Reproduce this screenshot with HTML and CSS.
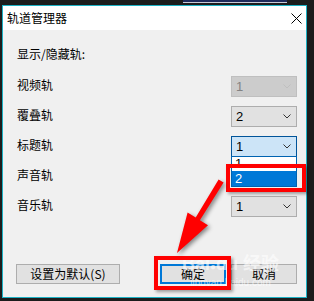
FILE: index.html
```html
<!DOCTYPE html>
<html lang="zh-CN">
<head>
<meta charset="utf-8">
<title>轨道管理器</title>
<link rel="stylesheet" href="styles.css">
</head>
<body>
<div class="screen">
  <div class="bg-strip"></div>
  <div class="dialog">
    <div class="titlebar">
      <span class="title">轨道管理器</span>
      <svg class="close" width="11" height="11" viewBox="0 0 11 11"><path d="M0.5 0.5 L10.5 10.5 M10.5 0.5 L0.5 10.5" stroke="#000" stroke-width="1" fill="none"/></svg>
    </div>
    <div class="content">
      <div class="heading">显示/隐藏轨:</div>
      <div class="rows">
        <div class="row"><span class="label">视频轨</span><div class="combo disabled"><span>1</span><svg class="chev" width="8" height="5" viewBox="0 0 8 5"><path d="M0.5 0.5 L4 4 L7.5 0.5" stroke="currentColor" fill="none"/></svg></div></div>
        <div class="row"><span class="label">覆叠轨</span><div class="combo"><span>2</span><svg class="chev" width="8" height="5" viewBox="0 0 8 5"><path d="M0.5 0.5 L4 4 L7.5 0.5" stroke="currentColor" fill="none"/></svg></div></div>
        <div class="row"><span class="label">标题轨</span><div class="combo open"><span>1</span><svg class="chev" width="8" height="5" viewBox="0 0 8 5"><path d="M0.5 0.5 L4 4 L7.5 0.5" stroke="currentColor" fill="none"/></svg>
          <div class="dropdown"><div class="opt">1</div><div class="opt sel">2</div></div>
        </div></div>
        <div class="row"><span class="label">声音轨</span><div class="combo"></div></div>
        <div class="row"><span class="label">音乐轨</span><div class="combo"><span>1</span><svg class="chev" width="8" height="5" viewBox="0 0 8 5"><path d="M0.5 0.5 L4 4 L7.5 0.5" stroke="currentColor" fill="none"/></svg></div></div>
      </div>
      <div class="footer">
        <button class="btn wide">设置为默认(S)</button>
        <div class="btn-group">
          <button class="btn default">确定</button>
          <button class="btn">取消</button>
        </div>
      </div>
    </div>
  </div>
  <div class="watermark"><span class="wm-main">Bai<span class="paw">&#9679;</span>du 经验</span><span class="wm-sub">jingyan.baidu.com</span></div>
  <div class="hl hl-option"></div>
  <div class="hl hl-ok"></div>
  <svg class="arrow" width="314" height="301" viewBox="0 0 314 301">
    <polygon points="223.6,182.6 218.6,179.4 195.7,217.6 187.6,212.6 177,253 208,225.2 199.9,220.2" fill="#ff0000"/>
  </svg>
</div>
</body>
</html>
```

FILE: styles.css
```css
* { box-sizing: border-box; }
html, body { margin: 0; padding: 0; }
body {
  background: #1c1c1c;
  font-family: "Noto Sans CJK SC", "Noto Sans", sans-serif;
  font-size: 12px;
  color: #000;
}
.screen {
  position: relative;
  width: 314px;
  height: 301px;
  padding: 5px 7px 3px 2px;
  overflow: hidden;
}
.bg-strip {
  position: absolute;
  left: 183px;
  top: 0;
  width: 104px;
  height: 3px;
  background: #1d2a5a;
  border-bottom: 1px solid #c9c9d6;
}
.dialog {
  width: 305px;
  height: 293px;
  border: 1px solid #1cb1c4;
  background: #f0f0f0;
  display: flex;
  flex-direction: column;
}
.titlebar {
  height: 24px;
  background: #ffffff;
  display: flex;
  align-items: center;
  justify-content: space-between;
  padding: 0 4px 0 4px;
  flex: none;
}
.title { line-height: 16px; }
.close { display: block; }
.content {
  flex: 1;
  display: flex;
  flex-direction: column;
  padding: 16px 9px 13px 14px;
}
.heading { line-height: 16px; }
.rows {
  margin-top: 14px;
  display: flex;
  flex-direction: column;
  gap: 10px;
}
.row {
  display: flex;
  justify-content: space-between;
  align-items: center;
  height: 20px;
}
.label { line-height: 16px; margin-top: -3px; }
.combo {
  position: relative;
  width: 66px;
  height: 21px;
  background: #e1e1e1;
  border: 1px solid #adadad;
  display: flex;
  align-items: center;
  justify-content: space-between;
  padding: 0 5px 0 4px;
  color: #333;
  font-family: "Liberation Sans", sans-serif;
  font-size: 13px;
}
.combo span { color: #000; }
.combo.disabled { background: #cccccc; border-color: #bfbfbf; color: #bfbfbf; }
.combo.disabled span { color: #838383; }
.combo.open { background: #cce4f7; border-color: #005499; }
.chev { display: block; }
.dropdown {
  position: absolute;
  left: -1px;
  top: 19px;
  width: 66px;
  background: #fff;
  border: 1px solid #0063b1;
  z-index: 2;
}
.opt { height: 14px; line-height: 14px; padding-left: 3px; color: #000; }
.opt.sel { background: #0078d7; color: #fff; height: 15px; line-height: 15px; }
.footer {
  margin-top: auto;
  margin-left: -1px;
  display: flex;
  justify-content: space-between;
  align-items: center;
}
.btn {
  height: 20px;
  width: 66px;
  background: #e1e1e1;
  border: 1px solid #adadad;
  font-family: "Noto Sans CJK SC", sans-serif;
  font-size: 12px;
  line-height: 16px;
  padding: 0;
  color: #000;
}
.btn.wide { width: 104px; }
.btn.default { border: 2px solid #0078d7; }
.btn-group { display: flex; gap: 5px; }
.hl {
  position: absolute;
  border: 4px solid #ff0000;
  box-shadow: 2px 2px 3px rgba(0,0,0,0.35);
  z-index: 5;
}
.hl-option { left: 226px; top: 164px; width: 80px; height: 28px; }
.hl-ok { left: 154px; top: 256px; width: 77px; height: 34px; }
.arrow {
  position: absolute;
  left: 0;
  top: 0;
  z-index: 6;
  filter: drop-shadow(2px 2px 2px rgba(0,0,0,0.45));
}
.watermark {
  position: absolute;
  left: 182px;
  top: 254px;
  display: flex;
  flex-direction: column;
  align-items: center;
  color: rgba(255,255,255,0.6);
  z-index: 4;
  pointer-events: none;
}
.wm-main { font-family: "Liberation Sans", "Noto Sans CJK SC", sans-serif; font-weight: bold; font-size: 18px; line-height: 20px; }
.paw { font-size: 10px; }
.wm-sub { font-family: "Liberation Sans", sans-serif; font-size: 10px; line-height: 11px; }
```
